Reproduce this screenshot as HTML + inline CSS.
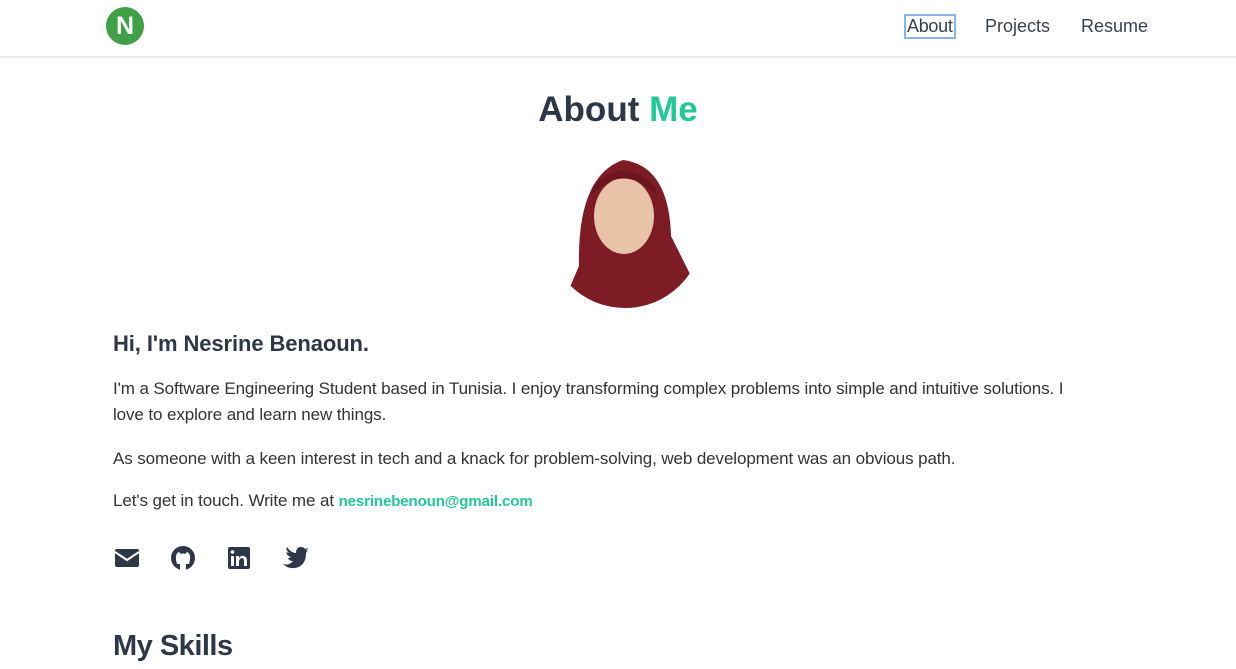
<!DOCTYPE html>
<html><head><meta charset="utf-8"><style>
*{margin:0;padding:0;box-sizing:border-box}
body{width:1236px;height:669px;overflow:hidden;background:#fff;font-family:"Liberation Sans",sans-serif;color:#2d3748}
.nav{height:58px;border-bottom:2px solid #e8e8e8;position:relative}
.logo{position:absolute;left:106px;top:7px;width:38px;height:38px;border-radius:50%;background:#3fa046;color:#fff;font-weight:bold;font-size:25px;text-align:center;line-height:38px}
.links{position:absolute;top:16px;font-size:18px;color:#3a4150}
.links span{position:absolute;white-space:nowrap}
h1{position:absolute;top:90px;width:100%;text-align:center;font-size:35px;font-weight:bold;color:#2d3748}
h1 b{color:#20c997}
.p{position:absolute;left:113px;font-size:17px;line-height:26px;color:#333;width:1005px;letter-spacing:-0.1px}
</style></head><body>
<div class="nav"><div class="logo">N</div>
<div class="links"><span style="left:904px;top:-2px;border:2px solid #8ab4e8;padding:0 1px;letter-spacing:-0.3px">About</span><span style="left:985px">Projects</span><span style="left:1081px">Resume</span></div></div>
<h1>About <b>Me</b></h1>
<svg style="position:absolute;left:551px;top:156px" width="148" height="152">
<defs><clipPath id="c"><circle cx="74" cy="74" r="78"/></clipPath></defs>
<g clip-path="url(#c)"><rect width="148" height="152" fill="#fff"/>
<path d="M10 152 L28 110 Q26 20 72 4 Q118 10 120 80 L140 120 L148 152Z" fill="#7e1c26"/>
<ellipse cx="73" cy="60" rx="30" ry="38" fill="#e9c3a8"/>
<path d="M40 40 Q72 5 106 40 L104 30 Q72 0 42 30Z" fill="#6d141e"/></g></svg>
<div class="p" style="top:331px;font-size:22px;font-weight:bold;color:#2d3748">Hi, I'm Nesrine Benaoun.</div>
<div class="p" style="top:376px;width:968px">I'm a Software Engineering Student based in Tunisia. I enjoy transforming complex problems into simple and intuitive solutions. I love to explore and learn new things.</div>
<div class="p" style="top:446px">As someone with a keen interest in tech and a knack for problem-solving, web development was an obvious path.</div>
<div class="p" style="top:488px">Let's get in touch. Write me at <b style="color:#20c997;font-size:15px">nesrinebenoun@gmail.com</b></div>
<svg style="position:absolute;left:114px;top:546px" width="200" height="26" fill="#2d3748">
<rect x="1" y="3" width="24" height="18" rx="2"/><path d="M1 6 L13 14 L25 6" stroke="#fff" stroke-width="2" fill="none"/>
<circle cx="69" cy="12" r="12"/><path d="M63 18 Q60 8 65 6 L67 8 Q69 7 71 8 L73 6 Q78 8 75 18Z M66 24 L66 18 L72 18 L72 24Z" fill="#fff"/>
<rect x="114" y="1" width="22" height="22" rx="2"/><rect x="117" y="10" width="3" height="10" fill="#fff"/><circle cx="118.5" cy="6" r="1.8" fill="#fff"/><path d="M122 10h3v2q2-3 5-2q3 1 3 5v5h-3v-5q0-3-2-3t-3 3v5h-3z" fill="#fff"/>
<g transform="translate(-5 0)"><path d="M174 18 Q180 20 184 15 Q180 15 179 12 Q181 12 182 11 Q178 10 177 6 Q179 7 180 7 Q176 3 178 1 Q182 7 187 7 Q187 1 192 1 Q195 1 196 3 L199 2 L197 5 L199 4 L197 7 Q197 20 186 22 Q179 23 174 18Z"/></g></svg>
<div class="p" style="top:633px;font-size:29px;font-weight:bold;color:#2d3748;letter-spacing:-0.5px">My Skills</div>
</body></html>
